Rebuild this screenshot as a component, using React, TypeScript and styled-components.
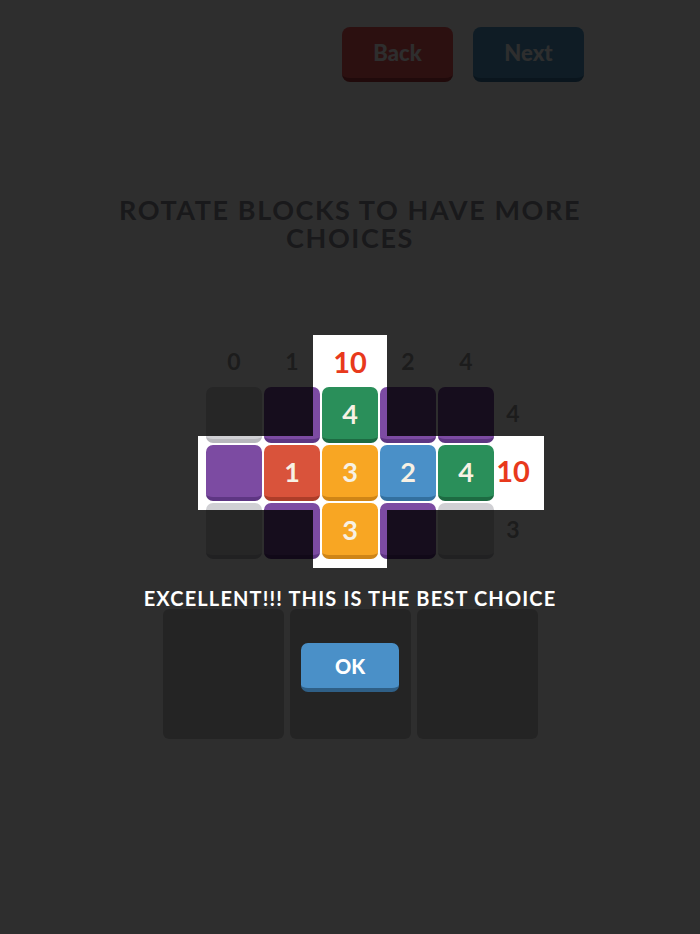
import styled, { createGlobalStyle } from "styled-components";

const GlobalStyle = createGlobalStyle`
  html, body {
    margin: 0;
    padding: 0;
    background: #2e2e2e;
    overflow: hidden;
  }
`;

// board geometry (px)
const CELL = 56;
const GAP = 2;
const SIDE = 34;
const HEAD = 48;
const PAD = 9;
const DIM = "rgba(0, 0, 0, 0.82)";

const palette: Record<string, [string, string]> = {
  empty: ["#d0d0d4", "#b8b8bd"],
  purple: ["#7c4ba2", "#5e3683"],
  red: ["#d9533b", "#ad3d29"],
  orange: ["#f8a623", "#cf8516"],
  blue: ["#4a90c8", "#33709f"],
  green: ["#2a8f5a", "#1d6b42"],
};

type Tile = { color: string; value?: number };

const rows: Tile[][] = [
  [{ color: "empty" }, { color: "purple" }, { color: "green", value: 4 }, { color: "purple" }, { color: "purple" }],
  [{ color: "purple" }, { color: "red", value: 1 }, { color: "orange", value: 3 }, { color: "blue", value: 2 }, { color: "green", value: 4 }],
  [{ color: "empty" }, { color: "purple" }, { color: "orange", value: 3 }, { color: "purple" }, { color: "empty" }],
];
const colSums = [0, 1, 10, 2, 4];
const rowSums = [4, 10, 3];
const focusCol = 2;
const focusRow = 1;

const Page = styled.div`
  position: relative;
  width: 700px;
  height: 934px;
  overflow: hidden;
  background: #ffffff;
  font-family: Lato, "Open Sans", sans-serif;
  padding-top: 27px;
  box-sizing: border-box;
  display: flex;
  flex-direction: column;
  align-items: center;
`;

const TopBar = styled.div`
  align-self: stretch;
  display: flex;
  justify-content: flex-end;
  gap: 20px;
  padding-right: 116px;
`;

const NavButton = styled.button<{ $face: string; $edge: string }>`
  width: 111px;
  height: 55px;
  border: none;
  border-bottom: 4px solid ${(p) => p.$edge};
  border-radius: 8px;
  background: ${(p) => p.$face};
  color: #ffffff;
  font-family: inherit;
  font-weight: 900;
  font-size: 22px;
  padding: 0;
`;

const Title = styled.h1`
  margin: 114px 0 0;
  max-width: 500px;
  text-align: center;
  font-size: 27px;
  line-height: 28px;
  font-weight: 700;
  letter-spacing: 1.6px;
  color: #8c8c94;
`;

const BoardWrap = styled.div`
  position: relative;
  margin-top: 85px;
`;

const Board = styled.div`
  display: grid;
  grid-template-columns: ${SIDE}px repeat(5, ${CELL}px) ${SIDE}px;
  grid-template-rows: ${HEAD}px repeat(3, ${CELL}px);
  gap: ${GAP}px;
`;

const Label = styled.div<{ $hot?: boolean; $side?: boolean }>`
  display: flex;
  align-items: center;
  justify-content: center;
  padding-bottom: ${(p) => (p.$side ? 5 : 0)}px;
  font-size: ${(p) => (p.$hot ? 29 : 23)}px;
  font-weight: 700;
  color: ${(p) => (p.$hot ? "#e8391c" : "#9c9c9c")};
`;

const Cell = styled.div<{ $face: string; $edge: string }>`
  box-sizing: border-box;
  border-radius: 7px;
  background: ${(p) => p.$face};
  border-bottom: 4px solid ${(p) => p.$edge};
  display: flex;
  align-items: center;
  justify-content: center;
  color: #f7f1e4;
  font-size: 27px;
  font-weight: 700;
`;

const Spacer = styled.div``;

const BIG = 1000;
const colX = (c: number) => SIDE + GAP + c * (CELL + GAP);
const rowY = (r: number) => HEAD + GAP + r * (CELL + GAP);
const boardW = SIDE * 2 + CELL * 5 + GAP * 6;

function spotlightPath() {
  const vx0 = colX(focusCol) - PAD + BIG;
  const vx1 = colX(focusCol) + CELL + PAD + BIG;
  const vy0 = -2 + BIG;
  const vy1 = rowY(2) + CELL + PAD + BIG;
  const hy0 = rowY(focusRow) - PAD + BIG;
  const hy1 = rowY(focusRow) + CELL + PAD + BIG;
  const hx0 = SIDE - 6 + BIG;
  const hx1 = boardW + 14 + BIG;
  return `M0 0 H3000 V3000 H0 Z M${vx0} ${vy0} H${vx1} V${hy0} H${hx1} V${hy1} H${vx1} V${vy1} H${vx0} V${hy1} H${hx0} V${hy0} H${vx0} Z`;
}

const Overlay = styled.div`
  position: absolute;
  left: -${BIG}px;
  top: -${BIG}px;
  width: 3000px;
  height: 3000px;
  background: ${DIM};
  z-index: 1;
  pointer-events: none;
`;

const Cards = styled.div`
  margin-top: 50px;
  display: flex;
  gap: 6px;
`;

const Card = styled.div`
  width: 121px;
  height: 130px;
  border-radius: 6px;
  background: #c9c9c9;
`;

const Popup = styled.div`
  position: absolute;
  top: 584px;
  left: 0;
  right: 0;
  z-index: 2;
  display: flex;
  flex-direction: column;
  align-items: center;
`;

const Message = styled.div`
  color: #ffffff;
  font-size: 20px;
  line-height: 28px;
  font-weight: 700;
  letter-spacing: 1.15px;
`;

const OkButton = styled.button`
  margin-top: 31px;
  width: 98px;
  height: 49px;
  border: none;
  border-bottom: 4px solid #2f5f86;
  border-radius: 7px;
  background: #4a90c8;
  color: #ffffff;
  font-family: inherit;
  font-size: 20px;
  font-weight: 900;
  padding: 0;
`;

export default function App() {
  return (
    <>
      <GlobalStyle />
      <Page>
        <TopBar>
          <NavButton $face="#f05a5c" $edge="#b23b3e">Back</NavButton>
          <NavButton $face="#529ccd" $edge="#3a759e">Next</NavButton>
        </TopBar>
        <Title>ROTATE BLOCKS TO HAVE MORE CHOICES</Title>
        <BoardWrap>
          <Board>
            <Spacer />
            {colSums.map((s, i) => (
              <Label key={"c" + i} $hot={i === focusCol}>
                {s}
              </Label>
            ))}
            <Spacer />
            {rows.map((row, r) => [
              <Spacer key={"s" + r} />,
              ...row.map((t, c) => (
                <Cell key={r + "-" + c} $face={palette[t.color][0]} $edge={palette[t.color][1]}>
                  {t.value}
                </Cell>
              )),
              <Label key={"r" + r} $side $hot={r === focusRow}>
                {rowSums[r]}
              </Label>,
            ])}
          </Board>
          <Overlay style={{ clipPath: `path(evenodd, "${spotlightPath()}")` }} />
        </BoardWrap>
        <Cards>
          <Card />
          <Card />
          <Card />
        </Cards>
        <Popup>
          <Message>EXCELLENT!!! THIS IS THE BEST CHOICE</Message>
          <OkButton>OK</OkButton>
        </Popup>
      </Page>
    </>
  );
}
